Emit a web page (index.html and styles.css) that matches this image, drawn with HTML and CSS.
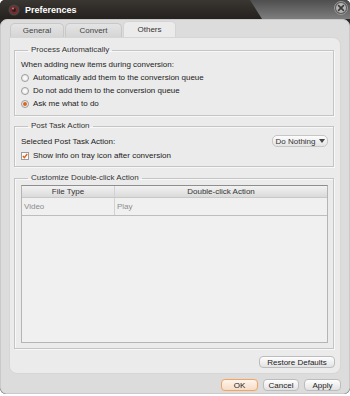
FILE: index.html
```html
<!DOCTYPE html>
<html>
<head>
  <title>Preferences</title>
  <link rel="stylesheet" href="styles.css">
</head>
<body>
  <div class="window">
    <div class="titlebar">
      <svg class="app-icon" width="12" height="12" viewBox="0 0 12 12">
        <circle cx="6" cy="6" r="5.5" fill="#4a4542"/>
        <circle cx="6" cy="6" r="4" fill="#7a2a2e"/>
        <circle cx="6" cy="6" r="2" fill="#2a1f1f"/>
        <circle cx="5" cy="4.5" r="1" fill="#c77"/>
      </svg>
      <span class="title">Preferences</span>
      <svg class="close" width="14" height="14" viewBox="0 0 14 14">
        <circle cx="7" cy="7" r="6.5" fill="#5a5a5a" stroke="#9a9a9a"/>
        <circle cx="7" cy="7" r="5" fill="#b4b4b4"/>
        <path d="M4.6 4.6 L9.4 9.4 M9.4 4.6 L4.6 9.4" stroke="#3c3c3c" stroke-width="1.6" stroke-linecap="round"/>
      </svg>
    </div>

    <div class="frame">
      <div class="tabs">
        <div class="tab">General</div>
        <div class="tab">Convert</div>
        <div class="tab active">Others</div>
      </div>

      <div class="panel">
        <fieldset class="group group-process">
          <legend>Process Automatically</legend>
          <div class="row">When adding new items during conversion:</div>
          <div class="row"><span class="radio"></span>Automatically add them to the conversion queue</div>
          <div class="row"><span class="radio"></span>Do not add them to the conversion queue</div>
          <div class="row"><span class="radio on"></span>Ask me what to do</div>
        </fieldset>

        <fieldset class="group group-post">
          <legend>Post Task Action</legend>
          <div class="row row-select">
            <span>Selected Post Task Action:</span>
            <div class="dropdown">Do Nothing <span class="caret"></span></div>
          </div>
          <div class="row"><span class="check">
            <svg width="6" height="6" viewBox="0 0 6 6"><path d="M0.8 3 L2.4 4.6 L5.2 1" fill="none" stroke="#d9661f" stroke-width="1.4"/></svg>
          </span>Show info on tray icon after conversion</div>
        </fieldset>

        <fieldset class="group group-dbl">
          <legend>Customize Double-click Action</legend>
          <div class="grid">
            <div class="grid-head">
              <div class="col-type">File Type</div>
              <div class="col-action">Double-click Action</div>
            </div>
            <div class="grid-row">
              <div class="col-type">Video</div>
              <div class="col-action">Play</div>
            </div>
          </div>
        </fieldset>

        <div class="panel-foot">
          <button class="btn btn-restore">Restore Defaults</button>
        </div>
      </div>

      <div class="buttons">
        <button class="btn btn-ok">OK</button>
        <button class="btn">Cancel</button>
        <button class="btn">Apply</button>
      </div>
    </div>
  </div>
</body>
</html>
```

FILE: styles.css
```css
body {
  margin: 0;
  background: #fff;
  font-family: "Liberation Sans", Arial, sans-serif;
  font-size: 8px;
  color: #222;
}
.window {
  width: 350px;
  height: 394px;
  display: flex;
  flex-direction: column;
  background: #2b2825;
  border-radius: 5px 5px 6px 6px;
  overflow: hidden;
}
.titlebar {
  position: relative;
  height: 19px;
  flex: none;
  display: flex;
  align-items: center;
  padding-left: 8px;
  background: linear-gradient(#3a3632, #24211e);
}
.titlebar::before {
  content: "";
  position: absolute;
  top: 0;
  right: 0;
  bottom: 0;
  left: 0;
  background: linear-gradient(#4e4e4e, #7e7e7e);
  clip-path: polygon(250px 0, 100% 0, 100% 100%, 262px 100%);
}
.app-icon {
  position: relative;
  margin-right: 5px;
}
.title {
  position: relative;
  color: #fff;
  font-weight: bold;
  font-size: 9px;
}
.close {
  position: absolute;
  right: 2px;
  top: 1px;
}
.frame {
  flex: 1;
  display: flex;
  flex-direction: column;
  background: #dcdcdc;
  border: 1px solid #c9c9c9;
  border-radius: 7px 7px 6px 6px;
  padding: 1px 8px 2px 8px;
}
.tabs {
  display: flex;
  height: 16px;
  padding-left: 1px;
  gap: 1px;
}
.tab {
  margin-top: 2px;
  width: 52px;
  display: flex;
  align-items: center;
  justify-content: center;
  background: linear-gradient(#e4e4e4, #d5d5d5);
  border: 1px solid #c8c8c8;
  border-bottom: none;
  border-radius: 5px 5px 0 0;
  color: #444;
}
.tab:nth-child(2) {
  width: 55px;
}
.tab.active {
  margin-top: 0;
  width: 51px;
  background: #ebebeb;
  border-color: #d4d4d4;
  color: #333;
}
.panel {
  flex: 1;
  display: flex;
  flex-direction: column;
  background: #ebebeb;
  border: 1px solid #d6d6d6;
  border-radius: 0 8px 8px 8px;
  padding: 7px 6px 5px 4px;
}
.group {
  margin: 0;
  padding: 3px 5px 5px 6px;
  border: 1px solid #c4c4c4;
  box-shadow: 1px 1px 0 #f8f8f8, inset 1px 1px 0 #f8f8f8;
}
.group legend {
  margin-left: 7px;
  padding: 0 3px;
  line-height: 10px;
  color: #333;
}
.group-post {
  margin-top: 5px;
  padding-bottom: 4px;
}
.group-dbl {
  flex: 1;
  margin-top: 6px;
  padding-top: 2px;
  display: flex;
  flex-direction: column;
}
.row {
  height: 13px;
  display: flex;
  align-items: center;
}
.row-select {
  height: 14px;
  margin-bottom: 1px;
  justify-content: space-between;
}
.radio {
  width: 8px;
  height: 8px;
  box-sizing: border-box;
  margin-right: 4px;
  border: 1px solid #9c9c9c;
  border-radius: 50%;
  background: radial-gradient(#fff, #e2e2e2);
  display: flex;
  align-items: center;
  justify-content: center;
}
.radio.on::after {
  content: "";
  width: 4px;
  height: 4px;
  border-radius: 50%;
  background: #d9661f;
}
.check {
  width: 8px;
  height: 8px;
  box-sizing: border-box;
  margin-right: 4px;
  border: 1px solid #9c9c9c;
  background: #fbfbfb;
  display: flex;
  align-items: center;
  justify-content: center;
}
.dropdown {
  width: 56px;
  height: 12px;
  box-sizing: border-box;
  display: flex;
  align-items: center;
  justify-content: center;
  gap: 3px;
  border: 1px solid #c6c6c6;
  border-radius: 5px;
  background: linear-gradient(#fdfdfd, #e4e4e4);
  color: #333;
}
.caret {
  width: 0;
  height: 0;
  border-left: 3px solid transparent;
  border-right: 3px solid transparent;
  border-top: 4px solid #444;
}
.grid {
  flex: 1;
  background: #f0f0f0;
  border: 1px solid #b4b4b4;
  border-top-color: #8e8e8e;
}
.grid-head,
.grid-row {
  display: flex;
}
.grid-head {
  height: 11px;
  align-items: center;
  text-align: center;
  background: linear-gradient(#f2f2f2, #dadada);
  border-bottom: 1px solid #c8c8c8;
  color: #333;
}
.grid-row {
  height: 17px;
  align-items: center;
  border-bottom: 1px solid #bdbdbd;
  color: #8c8c8c;
}
.col-type {
  width: 92px;
  height: 100%;
  display: flex;
  align-items: center;
  border-right: 1px solid #d2d2d2;
}
.col-action {
  flex: 1;
  display: flex;
  align-items: center;
}
.grid-head .col-type,
.grid-head .col-action {
  justify-content: center;
}
.grid-row .col-type {
  padding-left: 2px;
  width: 90px;
}
.grid-row .col-action {
  padding-left: 2px;
}
.panel-foot {
  display: flex;
  justify-content: flex-end;
  margin-top: 7px;
  margin-right: -1px;
}
.btn {
  height: 12px;
  width: 37px;
  padding: 0;
  box-sizing: border-box;
  font-family: inherit;
  font-size: 8px;
  color: #222;
  border: 1px solid #bcbcbc;
  border-radius: 4px;
  background: linear-gradient(#fefefe, #e2e2e2);
}
.btn-restore {
  width: 76px;
}
.btn-ok {
  border-color: #f2a468;
  background: linear-gradient(#fff5ec, #f6dcc6);
  box-shadow: 0 0 1px #f7c08e;
}
.buttons {
  display: flex;
  justify-content: flex-end;
  gap: 5px;
  margin-top: 5px;
}
.buttons .btn:nth-child(2) {
  width: 36px;
}
```
